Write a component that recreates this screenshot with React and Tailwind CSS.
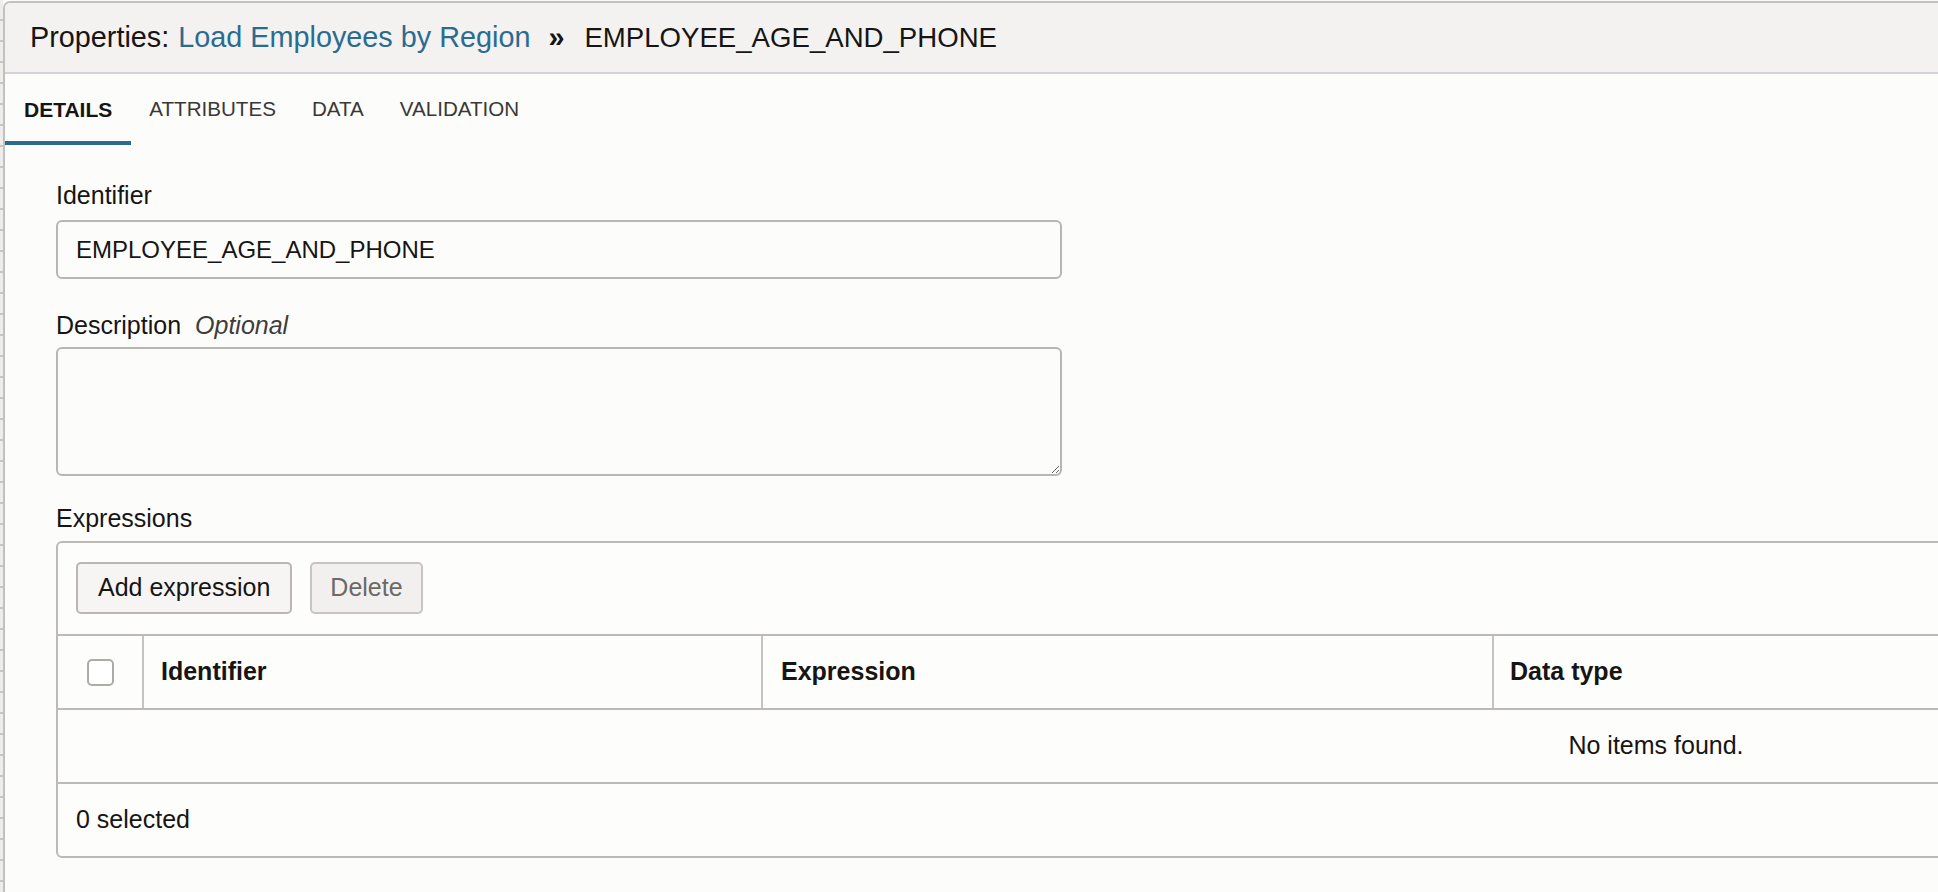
function Tab({ label, active }) {
  return (
    <div
      className={
        active
          ? "flex h-[71px] items-center border-b-4 border-[#2c6a8f] px-[19px] pt-[4px] text-[21px] font-bold text-[#161513]"
          : "flex h-[71px] items-center border-b-4 border-transparent px-[18px] pt-[4px] text-[20.6px] text-[#3a3836]"
      }
    >
      {label}
    </div>
  );
}

export default function App() {
  return (
    <div className="flex h-[892px] w-[1938px] overflow-hidden bg-[#fcfcfa] font-['Liberation_Sans',Arial,sans-serif] text-[#161513]">
      {/* background strip at the far left */}
      <div className="w-[3px] shrink-0 bg-[#ededeb] bg-[repeating-linear-gradient(to_bottom,transparent_0px,transparent_19px,#c9c7c4_19px,#c9c7c4_21px)]" />

      <div className="mt-[1px] w-[3400px] shrink-0 rounded-tl-[7px] border-l-2 border-t-2 border-[#c4c1bc] bg-[#fcfcfa]">
        <header className="flex h-[71px] items-center rounded-tl-[5px] border-b-2 border-[#d2d4da] bg-[#f3f2f0] pl-[25px] text-[28.8px]">
          <span>Properties:</span>
          <span className="ml-[9px] text-[#2c6b90]">Load Employees by Region</span>
          <span className="ml-[18px] font-semibold">»</span>
          <span className="ml-[20px] text-[27.6px]">EMPLOYEE_AGE_AND_PHONE</span>
        </header>

        <nav className="flex">
          <Tab label="DETAILS" active />
          <Tab label="ATTRIBUTES" />
          <Tab label="DATA" />
          <Tab label="VALIDATION" />
        </nav>

        <section className="pl-[51px] pt-[36px] text-[25px]">
          <label className="block h-[28px] leading-[28px]">Identifier</label>
          <input
            readOnly
            value="EMPLOYEE_AGE_AND_PHONE"
            className="mt-[11px] block h-[59px] w-[1006px] rounded-[6px] border-2 border-[#b9b6b1] bg-[#fcfcfa] px-[18px] text-[24px] text-[#161513] outline-none"
          />

          <label className="mt-[32px] block h-[28px] leading-[28px]">
            Description
            <span className="ml-[14px] italic text-[#3f3c39]">Optional</span>
          </label>
          <textarea className="mt-[8px] block h-[129px] w-[1006px] rounded-[6px] border-2 border-[#b9b6b1] bg-[#fcfcfa] outline-none" />

          <label className="mt-[28px] block h-[28px] leading-[28px]">Expressions</label>

          <div className="mt-[9px] w-[3200px] rounded-[6px] border-2 border-[#bdbab5] bg-[#fdfdfc]">
            <div className="flex gap-[18px] border-b-2 border-[#bdbab5] px-[18px] pb-[20px] pt-[19px]">
              <button className="h-[52px] rounded-[5px] border-2 border-[#bab7b2] bg-[#f6f5f3] px-[20px] text-[25px] text-[#161513]">
                Add expression
              </button>
              <button className="h-[52px] rounded-[5px] border-2 border-[#c8c5c0] bg-[#f1f0ee] px-[18px] text-[25px] text-[#6c6966]">
                Delete
              </button>
            </div>

            <div className="flex h-[74px] border-b-2 border-[#bdbab5] font-bold">
              <div className="flex w-[86px] items-center justify-center border-r-2 border-[#c6c3be]">
                <div className="h-[27px] w-[27px] rounded-[5px] border-2 border-[#aeaba6] bg-white" />
              </div>
              <div className="flex w-[619px] items-center border-r-2 border-[#c6c3be] pl-[17px]">Identifier</div>
              <div className="flex w-[731px] items-center border-r-2 border-[#c6c3be] pl-[18px]">Expression</div>
              <div className="flex flex-1 items-center pl-[16px]">Data type</div>
            </div>

            <div className="flex h-[74px] items-center justify-center border-b-2 border-[#bdbab5]">
              No items found.
            </div>

            <div className="flex h-[72px] items-center px-[18px]">0 selected</div>
          </div>
        </section>
      </div>
    </div>
  );
}
